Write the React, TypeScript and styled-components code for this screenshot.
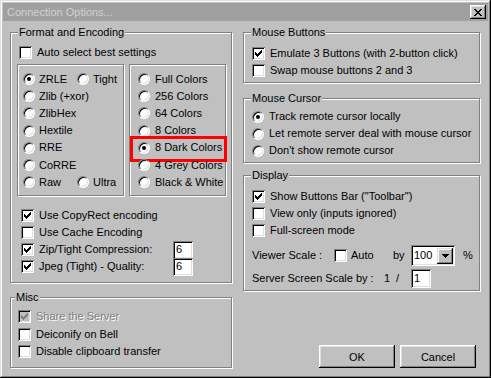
import React from 'react';
import styled, { createGlobalStyle } from 'styled-components';

const GlobalStyle = createGlobalStyle`
  html, body {
    margin: 0;
    padding: 0;
    background: #c0c0c0;
  }
  body {
    font-family: "Liberation Sans", Arial, sans-serif;
    font-size: 11px;
    color: #000;
  }
`;

const Window = styled.div`
  box-sizing: border-box;
  width: 491px;
  height: 378px;
  padding: 3px;
  background: #c0c0c0;
  display: flex;
  flex-direction: column;
  box-shadow: inset -1px -1px 0 #000, inset 1px 1px 0 #dfdfdf, inset -2px -2px 0 #808080,
    inset 2px 2px 0 #fff;
`;

const TitleBar = styled.div`
  height: 18px;
  flex: none;
  display: flex;
  align-items: center;
  justify-content: space-between;
  padding: 0 2px 0 4px;
  background: #a0a0a0;
  color: #d0d0d0;
  line-height: 13px;
`;

const CloseButton = styled.span`
  box-sizing: border-box;
  width: 16px;
  height: 14px;
  display: flex;
  align-items: center;
  justify-content: center;
  background: #c0c0c0;
  box-shadow: inset -1px -1px 0 #000, inset 1px 1px 0 #fff, inset -2px -2px 0 #808080,
    inset 2px 2px 0 #dfdfdf;
`;

const Body = styled.div`
  display: flex;
  gap: 10px;
  padding: 11px 0 0 7px;
`;

const Column = styled.div<{ $w: number }>`
  width: ${({ $w }) => $w}px;
  display: flex;
  flex-direction: column;
`;

// etched group box
const Group = styled.div<{ $w: number; $h: number; $mt?: number; $pad?: string }>`
  position: relative;
  box-sizing: border-box;
  width: ${({ $w }) => $w}px;
  height: ${({ $h }) => $h}px;
  margin-top: ${({ $mt }) => $mt ?? 0}px;
  padding: ${({ $pad }) => $pad ?? '0'};
  border: 1px solid #808080;
  box-shadow: 1px 1px 0 #fff, inset 1px 1px 0 #fff;
`;

const Legend = styled.span<{ $x?: number }>`
  position: absolute;
  top: -7px;
  left: ${({ $x }) => $x ?? 7}px;
  padding: 0 1px;
  line-height: 13px;
  background: #c0c0c0;
  white-space: nowrap;
`;

const PaneRow = styled.div`
  display: flex;
  gap: 5px;
  margin-top: 3px;
  padding-left: 6px;
`;

const Row = styled.div<{ $h: number; $mt?: number; $pl?: number; $mark?: boolean }>`
  position: relative;
  display: flex;
  align-items: center;
  height: ${({ $h }) => $h}px;
  margin-top: ${({ $mt }) => $mt ?? 0}px;
  padding-left: ${({ $pl }) => $pl ?? 0}px;
  white-space: nowrap;

  &::after {
    content: '';
    display: ${({ $mark }) => ($mark ? 'block' : 'none')};
    position: absolute;
    left: -8px;
    right: -2px;
    top: -3px;
    bottom: -6px;
    border: 3px solid #f00;
  }
`;

const Option = styled.label<{ $w?: number; $gap?: number }>`
  display: flex;
  align-items: center;
  gap: ${({ $gap }) => $gap ?? 5}px;
  width: ${({ $w }) => ($w ? `${$w}px` : 'auto')};
  flex: none;
  line-height: 13px;
`;

const Text = styled.span<{ $disabled?: boolean }>`
  color: ${({ $disabled }) => ($disabled ? '#808080' : '#000')};
  text-shadow: ${({ $disabled }) => ($disabled ? '1px 1px 0 #fff' : 'none')};
`;

const Cell = styled.span<{ $w: number }>`
  width: ${({ $w }) => $w}px;
  flex: none;
  line-height: 13px;
`;

const Box = styled.span<{ $disabled?: boolean }>`
  box-sizing: border-box;
  width: 13px;
  height: 13px;
  flex: none;
  display: inline-flex;
  align-items: center;
  justify-content: center;
  background: ${({ $disabled }) => ($disabled ? '#c0c0c0' : '#fff')};
  box-shadow: inset 1px 1px 0 #808080, inset -1px -1px 0 #fff, inset 2px 2px 0 #000,
    inset -2px -2px 0 #dfdfdf;
`;

const RadioDot = styled.span<{ $on?: boolean }>`
  position: relative;
  box-sizing: border-box;
  width: 12px;
  height: 12px;
  flex: none;
  border-radius: 50%;
  background: #fff;
  border: 1px solid;
  border-color: #808080 #fff #fff #808080;
  box-shadow: inset 1px 1px 0 #000, inset -1px -1px 0 #dfdfdf;

  &::after {
    content: '';
    display: ${({ $on }) => ($on ? 'block' : 'none')};
    position: absolute;
    left: 3px;
    top: 3px;
    width: 4px;
    height: 4px;
    border-radius: 50%;
    background: #000;
  }
`;

const Field = styled.span<{ $w: number; $h: number }>`
  box-sizing: border-box;
  width: ${({ $w }) => $w}px;
  height: ${({ $h }) => $h}px;
  flex: none;
  display: flex;
  align-items: center;
  padding-left: 3px;
  background: #fff;
  line-height: 13px;
  box-shadow: inset 1px 1px 0 #808080, inset -1px -1px 0 #fff, inset 2px 2px 0 #000,
    inset -2px -2px 0 #dfdfdf;
`;

const DropButton = styled.span`
  box-sizing: border-box;
  width: 16px;
  height: 16px;
  margin-left: auto;
  margin-right: 2px;
  display: flex;
  align-items: center;
  justify-content: center;
  background: #c0c0c0;
  box-shadow: inset -1px -1px 0 #000, inset 1px 1px 0 #dfdfdf, inset -2px -2px 0 #808080,
    inset 2px 2px 0 #fff;
`;

const ButtonRow = styled.div`
  display: flex;
  justify-content: flex-end;
  gap: 5px;
  margin-top: 54px;
  padding-right: 5px;
`;

const PushButton = styled.button`
  box-sizing: border-box;
  width: 76px;
  height: 23px;
  padding: 0;
  border: none;
  font: inherit;
  color: #000;
  background: #c0c0c0;
  box-shadow: inset -1px -1px 0 #000, inset 1px 1px 0 #fff, inset -2px -2px 0 #808080,
    inset 2px 2px 0 #dfdfdf;
`;

const CheckMark = ({ color }: { color: string }) => (
  <svg width="7" height="7" viewBox="0 0 7 7" shapeRendering="crispEdges">
    <path
      fill={color}
      d="M0 2h1v3H0z M1 3h1v3H1z M2 4h1v3H2z M3 3h1v3H3z M4 2h1v3H4z M5 1h1v3H5z M6 0h1v3H6z"
    />
  </svg>
);

const Check = ({ on, disabled }: { on?: boolean; disabled?: boolean }) => (
  <Box $disabled={disabled}>{on && <CheckMark color={disabled ? '#808080' : '#000'} />}</Box>
);

const CheckOption = ({
  label,
  on,
  disabled,
  w,
}: {
  label: string;
  on?: boolean;
  disabled?: boolean;
  w?: number;
}) => (
  <Option $w={w}>
    <Check on={on} disabled={disabled} />
    <Text $disabled={disabled}>{label}</Text>
  </Option>
);

const RadioOption = ({ label, on, w, gap }: { label: string; on?: boolean; w?: number; gap?: number }) => (
  <Option $w={w} $gap={gap}>
    <RadioDot $on={on} />
    <Text>{label}</Text>
  </Option>
);

const CloseGlyph = () => (
  <svg width="8" height="7" viewBox="0 0 8 7" shapeRendering="crispEdges">
    <path
      fill="#000"
      d="M0 0h2v1H0z M6 0h2v1H6z M1 1h2v1H1z M5 1h2v1H5z M2 2h4v1H2z M3 3h2v1H3z M2 4h4v1H2z M1 5h2v1H1z M5 5h2v1H5z M0 6h2v1H0z M6 6h2v1H6z"
    />
  </svg>
);

const DownArrow = () => (
  <svg width="7" height="4" viewBox="0 0 7 4" shapeRendering="crispEdges">
    <path fill="#000" d="M0 0h7v1H0z M1 1h5v1H1z M2 2h3v1H2z M3 3h1v1H3z" />
  </svg>
);

const colorModes = ['Full Colors', '256 Colors', '64 Colors', '8 Colors', '8 Dark Colors', '4 Grey Colors', 'Black & White'];

const App = () => {
  return (
    <>
      <GlobalStyle />
      <Window>
        <TitleBar>
          <span>Connection Options...</span>
          <CloseButton>
            <CloseGlyph />
          </CloseButton>
        </TitleBar>

        <Body>
          <Column $w={223}>
            <Group $w={222} $h={251}>
              <Legend>Format and Encoding</Legend>
              <Row $h={18} $mt={10} $pl={8}>
                <CheckOption label="Auto select best settings" />
              </Row>

              <PaneRow>
                <Group $w={107} $h={132} $pad="5.5px 0 0 5px">
                  <Row $h={17.2}>
                    <RadioOption label="ZRLE" on w={54} gap={4} />
                    <RadioOption label="Tight" gap={4} />
                  </Row>
                  <Row $h={17.2}>
                    <RadioOption label="Zlib (+xor)" gap={4} />
                  </Row>
                  <Row $h={17.2}>
                    <RadioOption label="ZlibHex" gap={4} />
                  </Row>
                  <Row $h={17.2}>
                    <RadioOption label="Hextile" gap={4} />
                  </Row>
                  <Row $h={17.2}>
                    <RadioOption label="RRE" gap={4} />
                  </Row>
                  <Row $h={17.2}>
                    <RadioOption label="CoRRE" gap={4} />
                  </Row>
                  <Row $h={17.2}>
                    <RadioOption label="Raw" w={54} gap={4} />
                    <RadioOption label="Ultra" gap={4} />
                  </Row>
                </Group>

                <Group $w={97} $h={132} $pad="5.5px 0 0 8px">
                  {colorModes.map((mode) => (
                    <Row key={mode} $h={17.2} $mark={mode === '8 Dark Colors'}>
                      <RadioOption label={mode} on={mode === '8 Dark Colors'} gap={5} />
                    </Row>
                  ))}
                </Group>
              </PaneRow>

              <Row $h={17} $mt={11} $pl={10}>
                <CheckOption label="Use CopyRect encoding" on />
              </Row>
              <Row $h={17} $pl={10}>
                <CheckOption label="Use Cache Encoding" />
              </Row>
              <Row $h={17} $pl={10}>
                <CheckOption label="Zip/Tight Compression:" on w={152} />
                <Field $w={20} $h={18}>6</Field>
              </Row>
              <Row $h={17} $pl={10}>
                <CheckOption label="Jpeg (Tight) - Quality:" on w={152} />
                <Field $w={20} $h={18}>6</Field>
              </Row>
            </Group>

            <Group $w={222} $h={71} $mt={14} $pad="9px 0 0 7px">
              <Legend $x={4}>Misc</Legend>
              <Row $h={18}>
                <CheckOption label="Share the Server" on disabled />
              </Row>
              <Row $h={18}>
                <CheckOption label="Deiconify on Bell" />
              </Row>
              <Row $h={17}>
                <CheckOption label="Disable clipboard transfer" />
              </Row>
            </Group>
          </Column>

          <Column $w={238}>
            <Group $w={237} $h={51} $pad="12px 0 0 8px">
              <Legend>Mouse Buttons</Legend>
              <Row $h={17}>
                <CheckOption label="Emulate 3 Buttons (with 2-button click)" on />
              </Row>
              <Row $h={17}>
                <CheckOption label="Swap mouse buttons 2 and 3" />
              </Row>
            </Group>

            <Group $w={237} $h={65} $mt={15} $pad="9px 0 0 8px">
              <Legend>Mouse Cursor</Legend>
              <Row $h={17}>
                <RadioOption label="Track remote cursor locally" on />
              </Row>
              <Row $h={17}>
                <RadioOption label="Let remote server deal with mouse cursor" />
              </Row>
              <Row $h={17}>
                <RadioOption label="Don't show remote cursor" />
              </Row>
            </Group>

            <Group $w={237} $h={116} $mt={12} $pad="12px 0 0 8px">
              <Legend>Display</Legend>
              <Row $h={17}>
                <CheckOption label='Show Buttons Bar ("Toolbar")' on />
              </Row>
              <Row $h={17}>
                <CheckOption label="View only (inputs ignored)" />
              </Row>
              <Row $h={17}>
                <CheckOption label="Full-screen mode" />
              </Row>
              <Row $h={21} $mt={6}>
                <Cell $w={82}>Viewer Scale :</Cell>
                <Option $gap={4} $w={59}>
                  <Check />
                  <Text>Auto</Text>
                </Option>
                <Cell $w={18}>by</Cell>
                <Field $w={44} $h={21}>
                  100
                  <DropButton>
                    <DownArrow />
                  </DropButton>
                </Field>
                <Cell $w={8} />
                <Cell $w={10}>%</Cell>
              </Row>
              <Row $h={20} $mt={2}>
                <Cell $w={132}>Server Screen Scale by :</Cell>
                <Cell $w={12}>1</Cell>
                <Cell $w={15}>/</Cell>
                <Field $w={20} $h={19}>1</Field>
              </Row>
            </Group>

            <ButtonRow>
              <PushButton>OK</PushButton>
              <PushButton>Cancel</PushButton>
            </ButtonRow>
          </Column>
        </Body>
      </Window>
    </>
  );
};

export default App;
